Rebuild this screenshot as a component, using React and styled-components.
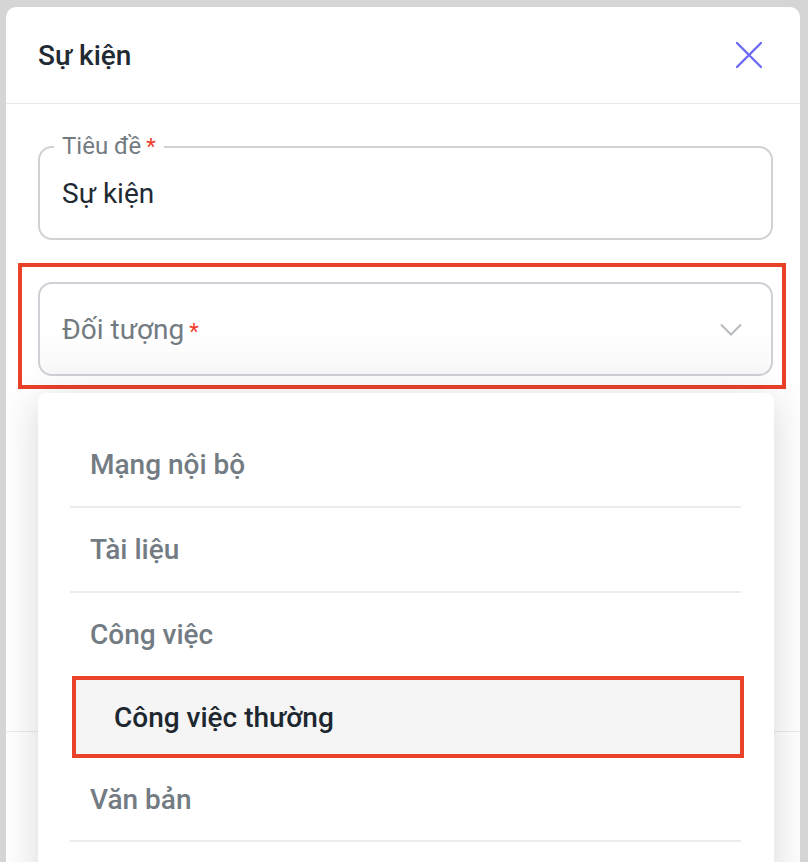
import styled, { createGlobalStyle } from "styled-components"

const Global = createGlobalStyle`
  html, body {
    margin: 0;
    padding: 0;
    background: #d5d5d5;
    font-family: Roboto, "Noto Sans", sans-serif;
  }
  * { box-sizing: border-box; }
`

const Page = styled.div`
  height: 862px;
  padding: 7px 8px 0 6px;
  overflow: hidden;
`

const Modal = styled.div`
  position: relative;
  width: 794px;
  height: 855px;
  background: #fff;
  border-radius: 10px 10px 0 0;
  overflow: hidden;
`

const Header = styled.div`
  display: flex;
  align-items: center;
  justify-content: space-between;
  height: 97px;
  padding: 0 38px 0 32px;
  border-bottom: 1px solid #e9e9e9;
`

const Title = styled.h2`
  margin: 0;
  font-size: 28px;
  font-weight: 500;
  color: #1f2a33;
`

const CloseButton = styled.button`
  display: flex;
  padding: 0;
  border: 0;
  background: none;
  cursor: pointer;
`

const Body = styled.div`
  height: 628px;
  padding: 30px 27px 0 32px;
  border-bottom: 1px solid #ececec;
`

const Field = styled.fieldset`
  margin: 0;
  height: 106px;
  padding: 0 14px;
  border: 2px solid #cfd2d5;
  border-radius: 14px;
`

const Legend = styled.legend`
  padding: 0 8px;
  font-size: 24px;
  line-height: 24px;
  color: #737b82;
`

const Req = styled.span`
  color: #ee3b2b;
  margin-left: 5px;
  font-size: 22px;
`

const Value = styled.div`
  padding: 18px 8px 0;
  font-size: 28px;
  color: #1f2a33;
`

const Marked = styled.div`
  margin: 23px -13px 0 -20px;
  padding: 15px 9px 9px 16px;
  border: 4px solid #ea4129;
`

const SelectBox = styled.div`
  display: flex;
  align-items: center;
  justify-content: space-between;
  height: 94px;
  padding: 0 29px 0 22px;
  border: 2px solid #cdd0d4;
  border-radius: 14px;
  background: linear-gradient(#fff 55%, #f8f8f8);
`

const Placeholder = styled.span`
  font-size: 28px;
  color: #737b82;
`

const Dropdown = styled.div`
  position: absolute;
  left: 32px;
  top: 386px;
  width: 736px;
  height: 520px;
  padding: 30px 33px 0 32px;
  background: #fff;
  border-radius: 8px;
  box-shadow: 0 6px 40px rgba(0, 0, 0, 0.16);
`

const Item = styled.div`
  display: flex;
  align-items: center;
  height: ${p => p.$h || 85}px;
  padding-left: 20px;
  font-size: 28px;
  font-weight: 500;
  color: #737b83;
  border-bottom: ${p => p.$flat ? "none" : "2px solid #ececec"};
`

const ChildItem = styled.div`
  display: flex;
  align-items: center;
  height: 82px;
  margin: 0 -3px 0 2px;
  padding-left: 38px;
  border: 4px solid #ea4129;
  background: #f5f5f5;
  font-size: 28px;
  font-weight: 500;
  color: #1d2730;
`

const items = ["Mạng nội bộ", "Tài liệu"]

export default function App() {
  return (
    <>
      <Global />
      <Page>
        <Modal>
          <Header>
            <Title>Sự kiện</Title>
            <CloseButton aria-label="close">
              <svg width="26" height="26" viewBox="0 0 26 26">
                <path d="M1 1L25 25M25 1L1 25" stroke="#6a6af2" strokeWidth="2.4" strokeLinecap="round" />
              </svg>
            </CloseButton>
          </Header>
          <Body>
            <Field>
              <Legend>Tiêu đề<Req>*</Req></Legend>
              <Value>Sự kiện</Value>
            </Field>
            <Marked>
              <SelectBox>
                <Placeholder>Đối tượng<Req>*</Req></Placeholder>
                <svg width="22" height="13" viewBox="0 0 22 13">
                  <path d="M1 1.5L11 11.5L21 1.5" fill="none" stroke="#b6bbbf" strokeWidth="2" />
                </svg>
              </SelectBox>
            </Marked>
          </Body>
          <Dropdown>
            {items.map(t => <Item key={t}>{t}</Item>)}
            <Item $flat $h={83}>Công việc</Item>
            <ChildItem>Công việc thường</ChildItem>
            <Item $h={84}>Văn bản</Item>
          </Dropdown>
        </Modal>
      </Page>
    </>
  )
}
